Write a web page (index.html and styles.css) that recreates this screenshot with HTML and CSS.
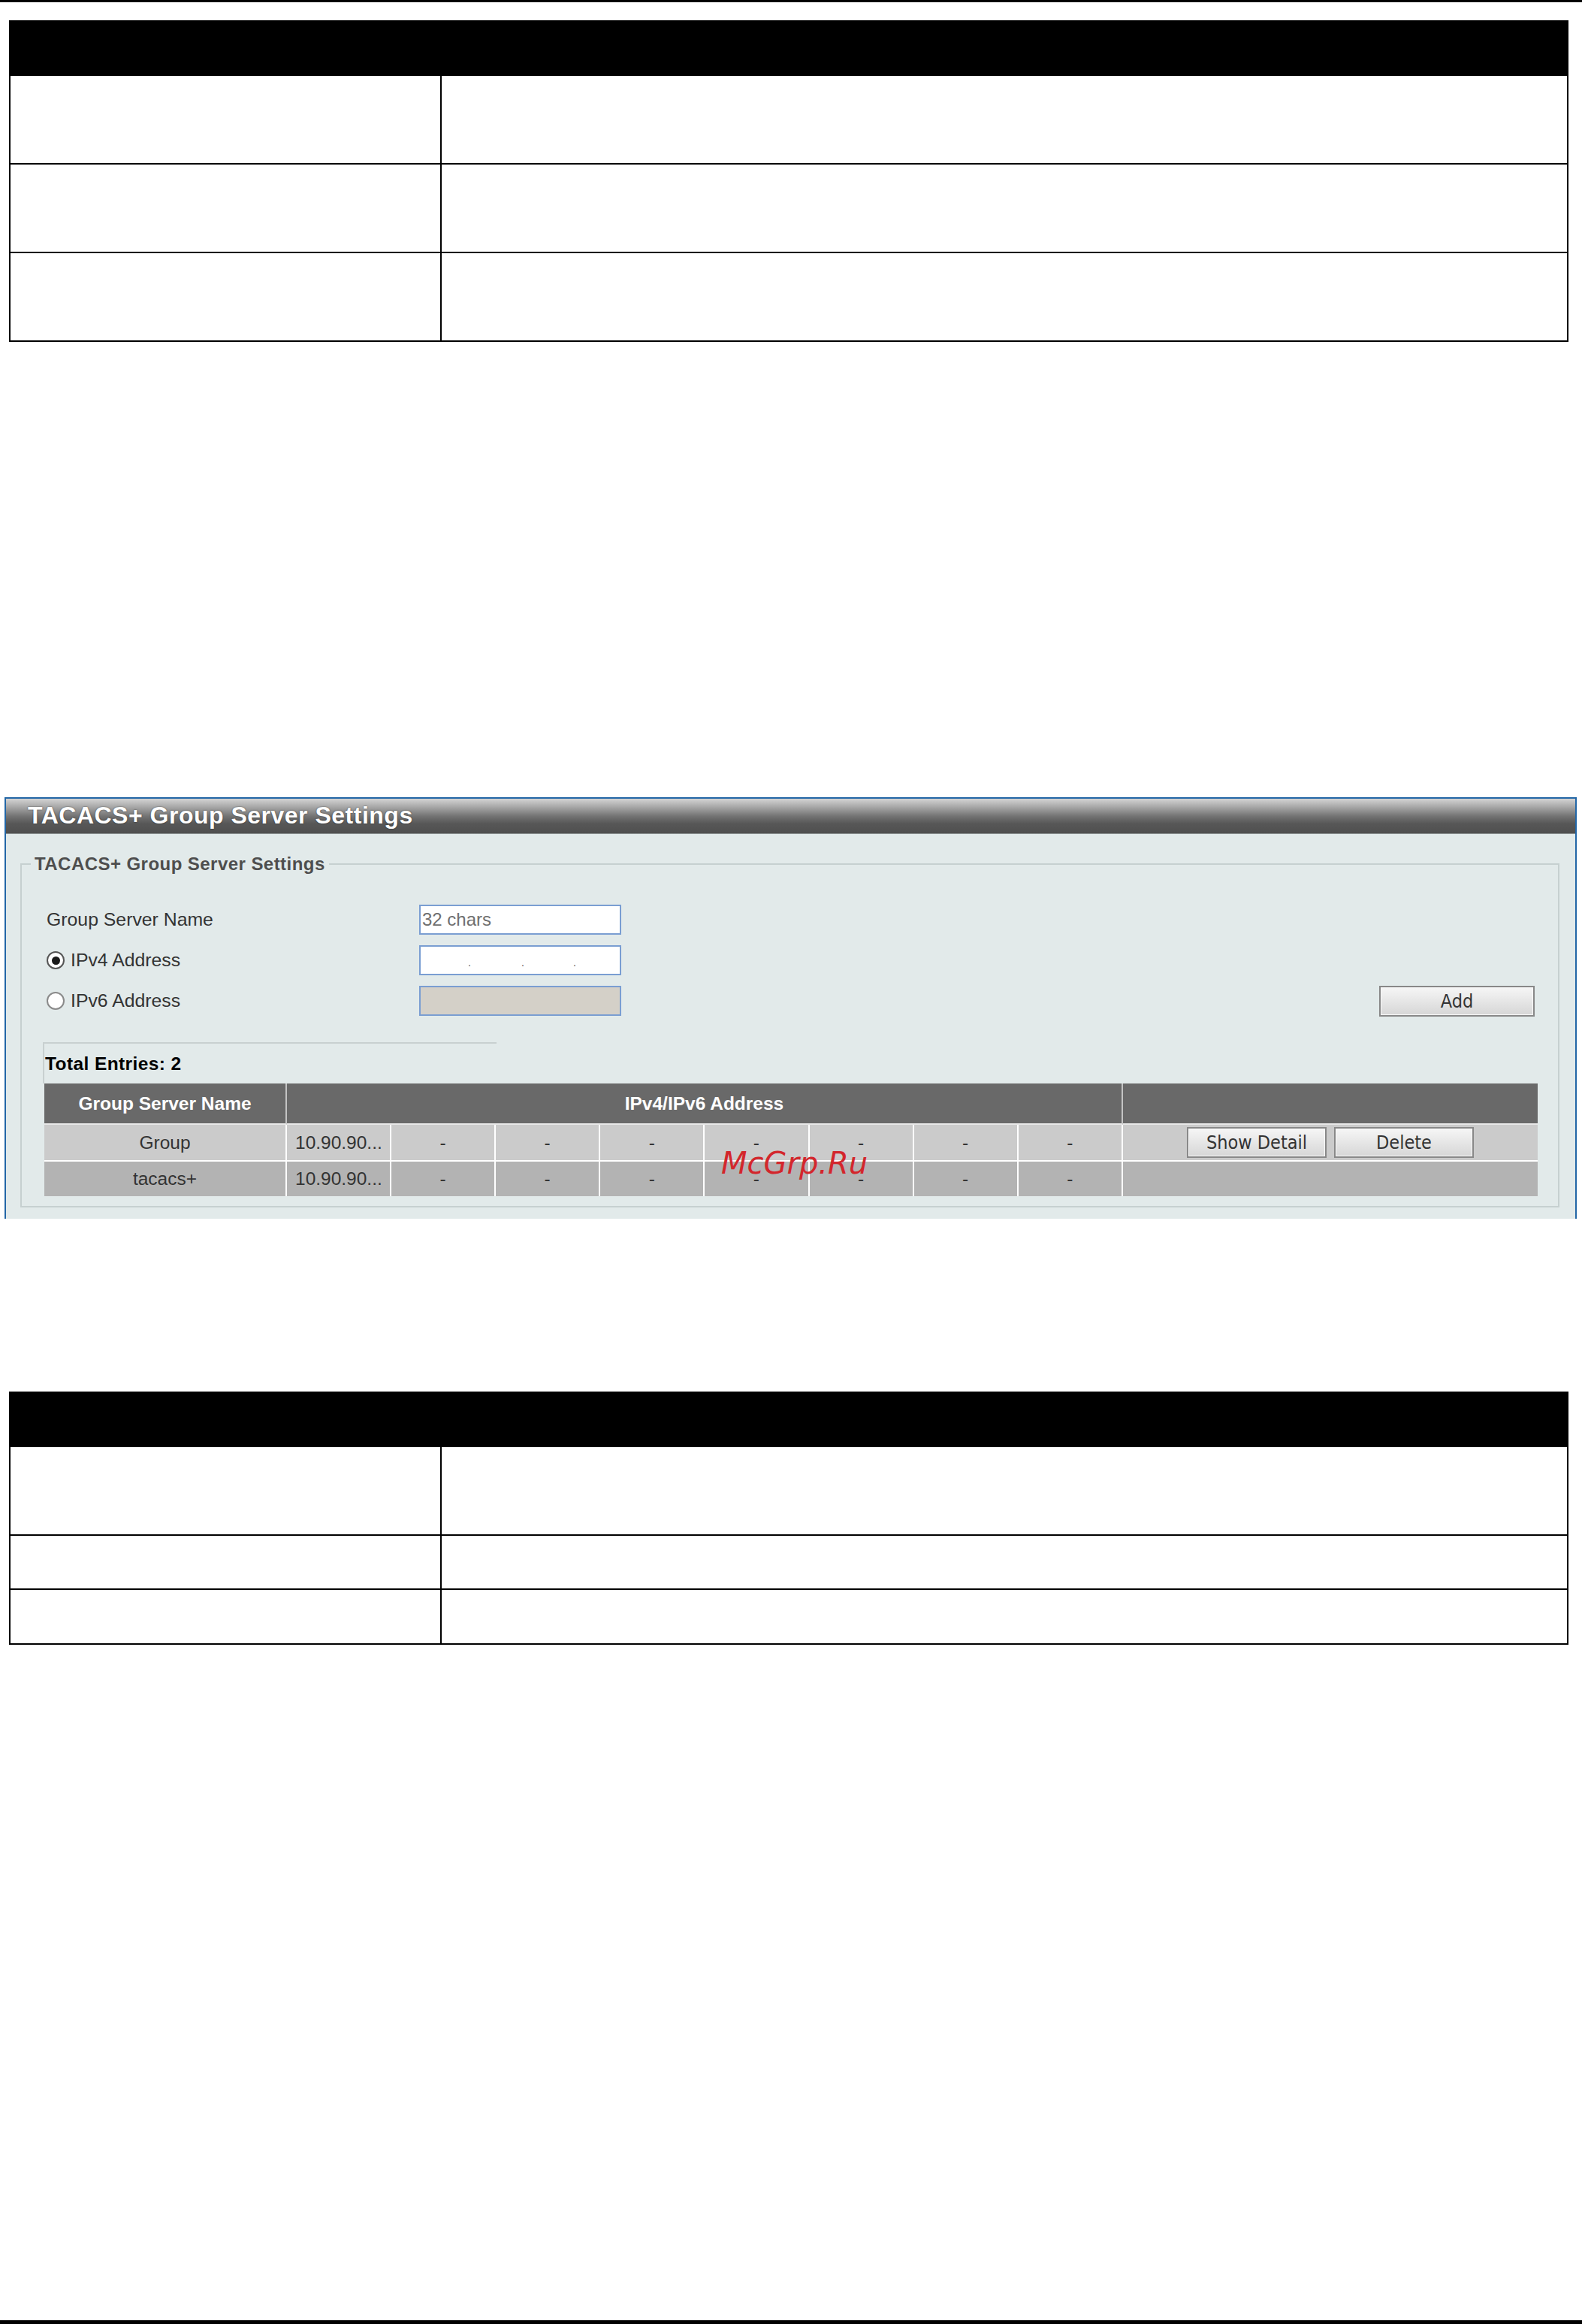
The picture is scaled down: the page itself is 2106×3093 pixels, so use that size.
FILE: index.html
```html
<!DOCTYPE html>
<html lang="en">
<head>
<meta charset="utf-8">
<title>TACACS+ Group Server Settings</title>
<link rel="stylesheet" href="styles.css">
</head>
<body>
<div class="page">
  <div class="rule rule-top"></div>

  <div class="doc-table t1">
    <div class="doc-head"></div>
    <div class="doc-row h116"><div class="c1"></div><div class="c2"></div></div>
    <div class="doc-row h116"><div class="c1"></div><div class="c2"></div></div>
    <div class="doc-row h116"><div class="c1"></div><div class="c2"></div></div>
  </div>

  <section class="panel">
    <div class="panel-title">TACACS+ Group Server Settings</div>
    <div class="panel-body">
      <fieldset class="fs">
        <legend>TACACS+ Group Server Settings</legend>
        <div class="form">
          <div class="frow">
            <div class="flabel">Group Server Name</div>
            <div class="field"><span class="ph">32 chars</span></div>
          </div>
          <div class="frow">
            <div class="flabel"><span class="radio on"><span class="dot"></span></span>IPv4 Address</div>
            <div class="field ipv4"><span class="seg s1"></span><span class="pt">.</span><span class="seg s2"></span><span class="pt">.</span><span class="seg s3"></span><span class="pt">.</span></div>
          </div>
          <div class="frow">
            <div class="flabel"><span class="radio"></span>IPv6 Address</div>
            <div class="field disabled"></div>
            <button class="btn add-btn" type="button">Add</button>
          </div>
        </div>

        <div class="entries">Total Entries: 2</div>

        <table class="list">
          <colgroup>
            <col class="w-name"><col class="w-ip"><col class="w-d"><col class="w-d"><col class="w-d"><col class="w-d"><col class="w-d"><col class="w-d"><col class="w-d"><col class="w-act">
          </colgroup>
          <thead>
            <tr><th>Group Server Name</th><th colspan="8">IPv4/IPv6 Address</th><th class="last"></th></tr>
          </thead>
          <tbody>
            <tr class="r1">
              <td class="name">Group</td><td class="ip">10.90.90...</td><td>-</td><td>-</td><td>-</td><td>-</td><td>-</td><td>-</td><td>-</td>
              <td class="last act"><button class="btn sd-btn" type="button">Show Detail</button><button class="btn del-btn" type="button">Delete</button></td>
            </tr>
            <tr class="r2">
              <td class="name">tacacs+</td><td class="ip">10.90.90...</td><td>-</td><td>-</td><td>-</td><td>-</td><td>-</td><td>-</td><td>-</td>
              <td class="last"></td>
            </tr>
          </tbody>
        </table>
      </fieldset>
    </div>
  </section>

  <div class="doc-table t2">
    <div class="doc-head"></div>
    <div class="doc-row h116"><div class="c1"></div><div class="c2"></div></div>
    <div class="doc-row h70"><div class="c1"></div><div class="c2"></div></div>
    <div class="doc-row h71"><div class="c1"></div><div class="c2"></div></div>
  </div>

  <div class="rule rule-bottom"></div>

  <div class="watermark">McGrp.Ru</div>
</div>
</body>
</html>
```

FILE: styles.css
```css
html, body {
  margin: 0;
  padding: 0;
  background: #fff;
}

body {
  font-family: "Liberation Sans", Arial, sans-serif;
  color: #333;
}

.page {
  position: relative;
  width: 2106px;
  min-height: 3093px;
  display: flex;
  flex-direction: column;
}

.rule {
  background: #000;
}

.rule-top {
  height: 3px;
}

.rule-bottom {
  height: 5px;
  margin-top: auto;
}

/* black document tables */
.doc-table {
  margin-left: 12px;
  width: 2076px;
  box-sizing: border-box;
  border-left: 2px solid #000;
  border-right: 2px solid #000;
}

.t1 {
  margin-top: 24px;
}

.t2 {
  margin-top: 230px;
}

.doc-head {
  height: 74px;
  background: #000;
}

.doc-row {
  display: grid;
  grid-template-columns: 574px 1fr;
  border-bottom: 2px solid #000;
}

.doc-row .c1 {
  border-right: 2px solid #000;
}

.h116 { height: 116px; }
.h70 { height: 70px; }
.h71 { height: 71px; }

/* panel */
.panel {
  margin-top: 606px;
  margin-left: 6px;
  width: 2093px;
  height: 561px;
  box-sizing: border-box;
  border: 2px solid #2266a6;
  border-bottom: none;
  background: #e2eaea;
  display: flex;
  flex-direction: column;
  overflow: hidden;
}

.panel-title {
  height: 47px;
  flex: none;
  box-sizing: border-box;
  padding-left: 29px;
  background: linear-gradient(to bottom, #d4d4d4 0%, #ababab 22%, #747474 50%, #575757 72%, #4f4f4f 100%);
  border-bottom: 1px solid #8a9090;
  color: #fff;
  font-weight: bold;
  font-size: 32px;
  letter-spacing: 0.5px;
  line-height: 44px;
  text-shadow: 0 0 2px rgba(0, 0, 0, 0.6);
}

.panel-body {
  flex: 1;
  padding: 26px 21px 12px 19px;
}

.fs {
  margin: 0;
  min-width: 0;
  border: 2px solid #c6d0d0;
  padding: 40px 27px 13px 30px;
}

.fs legend {
  margin-left: -18px;
  padding: 0 5px;
  font-weight: bold;
  font-size: 24px;
  letter-spacing: 0.45px;
  line-height: 28px;
  color: #4e4e4e;
}

/* form */
.form {
  display: flex;
  flex-direction: column;
  gap: 14px;
}

.frow {
  display: flex;
  align-items: center;
  height: 40px;
}

.flabel {
  width: 499px;
  flex: none;
  box-sizing: border-box;
  padding-left: 3px;
  display: flex;
  align-items: center;
  font-size: 24.8px;
  color: #333;
}

.radio {
  width: 24px;
  height: 24px;
  box-sizing: border-box;
  border: 2px solid #8a8a8a;
  border-radius: 50%;
  background: #fff;
  margin-right: 8px;
  display: flex;
  align-items: center;
  justify-content: center;
}

.radio.on {
  border-color: #555;
}

.radio .dot {
  width: 11px;
  height: 11px;
  border-radius: 50%;
  background: #1a1a1a;
}

.field {
  width: 269px;
  height: 40px;
  flex: none;
  box-sizing: border-box;
  border: 2px solid #7a9ed2;
  background: #fff;
  display: flex;
  align-items: center;
  padding-left: 2px;
  font-size: 24px;
}

.field .ph {
  color: #6f6f6f;
}

.field.ipv4 {
  align-items: flex-end;
  padding-bottom: 8px;
  font-size: 14px;
  color: #555;
}

.seg { display: block; flex: none; }
.s1 { width: 61px; }
.s2 { width: 67px; }
.s3 { width: 65px; }

.pt {
  width: 4px;
  line-height: 14px;
}

.field.disabled {
  background: #d4d0c8;
}

/* buttons */
.btn {
  margin: 0;
  padding: 0;
  height: 41px;
  box-sizing: border-box;
  border: 2px solid #888;
  background: linear-gradient(to bottom, #f6f6f6 0%, #e6e6e6 50%, #d6d6d6 100%);
  font-family: "DejaVu Sans", sans-serif;
  font-stretch: condensed;
  font-size: 25px;
  color: #333;
  line-height: 37px;
  box-shadow: inset 0 0 0 1px #f8f8f8;
}

.add-btn {
  width: 207px;
  margin-left: auto;
  margin-right: 4px;
  align-self: flex-start;
}

.sd-btn,
.del-btn {
  width: 186px;
}

.del-btn {
  margin-left: 10px;
}

/* entries */
.entries {
  margin-top: 35px;
  margin-left: -2px;
  width: 604px;
  height: 55px;
  box-sizing: border-box;
  border-top: 2px solid #c8d0d0;
  border-left: 2px solid #c8d0d0;
  padding-left: 1px;
  font-weight: bold;
  font-size: 24.5px;
  letter-spacing: 0.4px;
  line-height: 53px;
  color: #000;
}

/* list table */
.list {
  width: 1988px;
  table-layout: fixed;
  border-collapse: separate;
  border-spacing: 0;
  font-size: 24.5px;
  color: #333;
}

.w-name { width: 323px; }
.w-ip { width: 139px; }
.w-d { width: 139.14px; }
.w-act { width: 552px; }

.list th {
  box-sizing: border-box;
  height: 55px;
  padding: 0;
  background: #696969;
  color: #fff;
  font-weight: bold;
  font-size: 24.5px;
  text-align: center;
  border-right: 2px solid #c4c4c4;
  border-bottom: 2px solid #e8e8e8;
}

.list td {
  box-sizing: border-box;
  padding: 0;
  text-align: center;
  border-right: 2px solid #fff;
  white-space: nowrap;
  overflow: hidden;
}

.list .last {
  border-right: none;
}

.list tr.r1 td {
  height: 49px;
  background: #cbcbcb;
  border-bottom: 2px solid #fff;
}

.list tr.r2 td {
  height: 46px;
  background: #b3b3b3;
}

.list td.ip {
  text-align: left;
  padding-left: 11px;
}

.list td.act {
  font-size: 0;
}

/* watermark overlay */
.watermark {
  position: absolute;
  left: 960px;
  top: 1528px;
  font-family: "DejaVu Sans", sans-serif;
  font-style: italic;
  font-size: 40px;
  line-height: 40px;
  color: #d3262c;
  white-space: nowrap;
}
```
